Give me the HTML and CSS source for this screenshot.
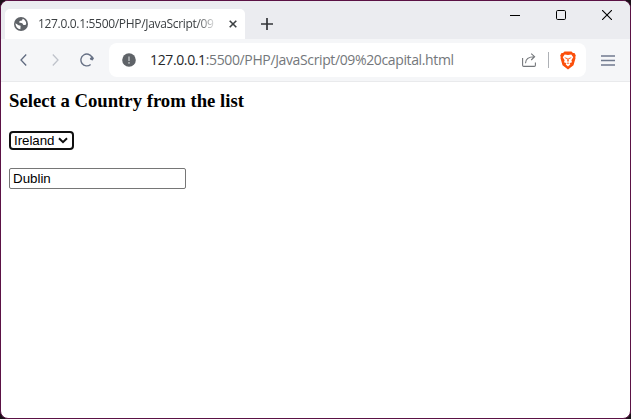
FILE: index.html
```html
<!DOCTYPE html>
<html lang="en">
<head>
<meta charset="utf-8">
<title>Select a Country</title>
<link rel="stylesheet" href="styles.css">
</head>
<body>
<div class="window">
  <header class="tabbar">
    <div class="tab">
      <svg class="globe" width="14" height="14" viewBox="0 0 14 14"><circle cx="7" cy="7" r="7" fill="#5f6368"/><path d="M1.5 6.3 L4.6 8.3 L6.6 8.7 L6.4 12.3 C3.5 12 1.6 9.6 1.5 6.3Z M8.7 1.8 L8 3.5 L5.6 4 L5.1 5.6 L8.3 6.2 L9.4 8 L11.5 8.1 L12.2 6.8 C12.2 4.5 10.8 2.5 8.7 1.8Z" fill="#fff"/></svg>
      <span class="tab-title">127.0.0.1:5500/PHP/JavaScript/09</span>
      <svg class="tab-close" width="8" height="8" viewBox="0 0 8 8"><path d="M.7 .7 7.3 7.3M7.3 .7 .7 7.3" stroke="#3c4043" stroke-width="1.6"/></svg>
    </div>
    <svg class="new-tab" width="12" height="12" viewBox="0 0 12 12"><path d="M6 0V12M0 6H12" stroke="#333539" stroke-width="1.7"/></svg>
    <div class="controls">
      <svg width="10" height="10" viewBox="0 0 10 10"><path d="M0 5.5H10" stroke="#000"/></svg>
      <svg width="10" height="10" viewBox="0 0 10 10"><rect x=".5" y=".5" width="9" height="9" rx="1.2" fill="none" stroke="#000"/></svg>
      <svg width="10" height="10" viewBox="0 0 10 10"><path d="M0 0 10 10M10 0 0 10" stroke="#000" stroke-width="1.1"/></svg>
    </div>
  </header>
  <nav class="toolbar">
    <div class="nav-icons">
      <svg width="7" height="12" viewBox="0 0 7 12"><path d="M6.2 .5 1 6 6.2 11.5" fill="none" stroke="#606b80" stroke-width="1.3"/></svg>
      <svg width="7" height="12" viewBox="0 0 7 12"><path d="M.8 .5 6 6 .8 11.5" fill="none" stroke="#bfc3cb" stroke-width="1.3"/></svg>
      <svg width="14" height="14" viewBox="0 0 14 14"><path d="M10.6 11.5A5.9 5.9 0 1 1 12 4.2" fill="none" stroke="#687286" stroke-width="1.4"/><path d="M9.8 5.2 12.4 3.2 14 5.2 12.6 7.5 10.3 6.8Z" fill="#687286"/></svg>
    </div>
    <div class="address">
      <svg class="info" width="14" height="14" viewBox="0 0 14 14"><circle cx="7" cy="7" r="6.8" fill="#5f6368"/><path d="M7 3.5V8M7 9V10.7" stroke="#b9bcbf" stroke-width="1.5"/></svg>
      <span class="url"><b>127.0.0.1</b>:5500/PHP/JavaScript/09%20capital.html</span>
      <svg class="share" width="14" height="14" viewBox="0 0 14 14"><path d="M.6 5V12.3Q.6 13.4 1.7 13.4H12.3Q13.4 13.4 13.4 12.3V9.5M3.5 10.2C3.6 6 6 3.7 12.5 3.7M9.2 .6 12.6 3.7 9.2 7" fill="none" stroke="#74777b" stroke-width="1.1"/></svg>
      <i class="divider"></i>
      <svg class="shield" width="16" height="19" viewBox="0 0 16 19"><path d="M4.5 .5H11.5L13 2 14.5 1.9 15.8 4.4 15.3 6 15.5 7.2 13.5 14.3 8 18.5 2.5 14.3 .5 7.2 .7 6 .2 4.4 1.5 1.9 3 2Z" fill="#fb4f0b"/><path d="M4.7 3.5 8 4 11.3 3.5 13.2 6.3 11.4 9.2 12 11.2 10 12.1 10.2 13.6 8 15.4 5.8 13.6 6 12.1 4 11.2 4.6 9.2 2.8 6.3Z" fill="#fff"/><path d="M4.2 6.3 7 7 6.5 8.2ZM11.8 6.3 9 7 9.5 8.2ZM7.5 7H8.5L8.8 10 8 11 7.2 10ZM6.2 12.2 8 11.5 9.8 12.2 8 12.7Z" fill="#fb4f0b"/></svg>
    </div>
    <svg class="menu" width="14" height="11" viewBox="0 0 14 11"><path d="M0 1H14M0 5.5H14M0 10H14" stroke="#707a8e" stroke-width="1.4"/></svg>
  </nav>
  <main class="page">
    <h3>Select a Country from the list</h3>
    <div class="select" tabindex="0"><span>Ireland</span><svg width="10" height="7" viewBox="0 0 10 7"><path d="M1 1.2 5 5.2 9 1.2" fill="none" stroke="#101010" stroke-width="2"/></svg></div>
    <input class="capital" type="text" value="Dublin">
  </main>
</div>
</body>
</html>
```
FILE: styles.css
```css
* { box-sizing: border-box; }
body { margin: 0; background: #1b1018; overflow: hidden; }
svg { display: block; flex: none; }
.window {
  width: 631px; height: 419px; overflow: hidden;
  border: 1px solid #5b1245; border-radius: 8px;
  background: #fff; display: flex; flex-direction: column;
}
.tabbar {
  height: 38px; flex: none; background: #ebecf0;
  display: flex; align-items: flex-start; padding-left: 4px;
}
.tab {
  width: 240px; height: 30px; margin-top: 8px; padding-left: 9px;
  background: #fff; border-radius: 5px 5px 0 0;
  display: flex; align-items: center;
}
.tab-title {
  width: 177px; margin-left: 10px; overflow: hidden; white-space: nowrap;
  font: 12px/18px "Open Sans", sans-serif; letter-spacing: -.32px; color: #3c4043;
  -webkit-mask-image: linear-gradient(90deg, #000 159px, transparent 180px);
  mask-image: linear-gradient(90deg, #000 159px, transparent 180px);
}
.tab-close { margin-left: 14px; }
.new-tab { margin: 17px 0 0 16px; }
.controls { display: flex; gap: 36px; margin: 9px 18px 0 auto; }
.toolbar {
  height: 43px; flex: none; background: #f5f6f8;
  border-bottom: 1px solid #e9eaec;
  display: flex; align-items: center; padding-left: 19px;
}
.nav-icons { display: flex; align-items: center; gap: 25px; width: 89px; }
.nav-icons svg:last-child { margin-left: -4px; }
.address {
  width: 477px; height: 34px; border-radius: 8px; background: #fff;
  display: flex; align-items: center; padding-left: 13px;
}
.url {
  width: 372px; margin-left: 14px; white-space: nowrap;
  font: 14px/20px "Open Sans", sans-serif; letter-spacing: -.37px; color: #74777b;
}
.url b { font-weight: 400; color: #26282b; }
.divider { width: 1px; height: 16px; margin: 0 11px 0 12px; background: #aeb1b6; }
.menu { margin-left: 15px; }
.page { padding: 7px 8px; flex: 1; }
h3 { margin: 0 0 19px; font: bold 18.72px/23px "Liberation Serif", serif; color: #000; }
.select {
  width: 65px; height: 19px; border: 2px solid #101010; border-radius: 4px;
  display: flex; align-items: center; gap: 4px; padding-left: 3px; outline: 0;
  font: 13.33px/15px "Liberation Sans", sans-serif; letter-spacing: -.05px; color: #000;
}
.capital {
  display: block; width: 177px; height: 21px; margin-top: 18px; padding: 1px 3px;
  border: 1px solid #767676; border-radius: 2px; background: #fff; color: #000;
  font: 13.33px "Liberation Sans", sans-serif;
}
```
